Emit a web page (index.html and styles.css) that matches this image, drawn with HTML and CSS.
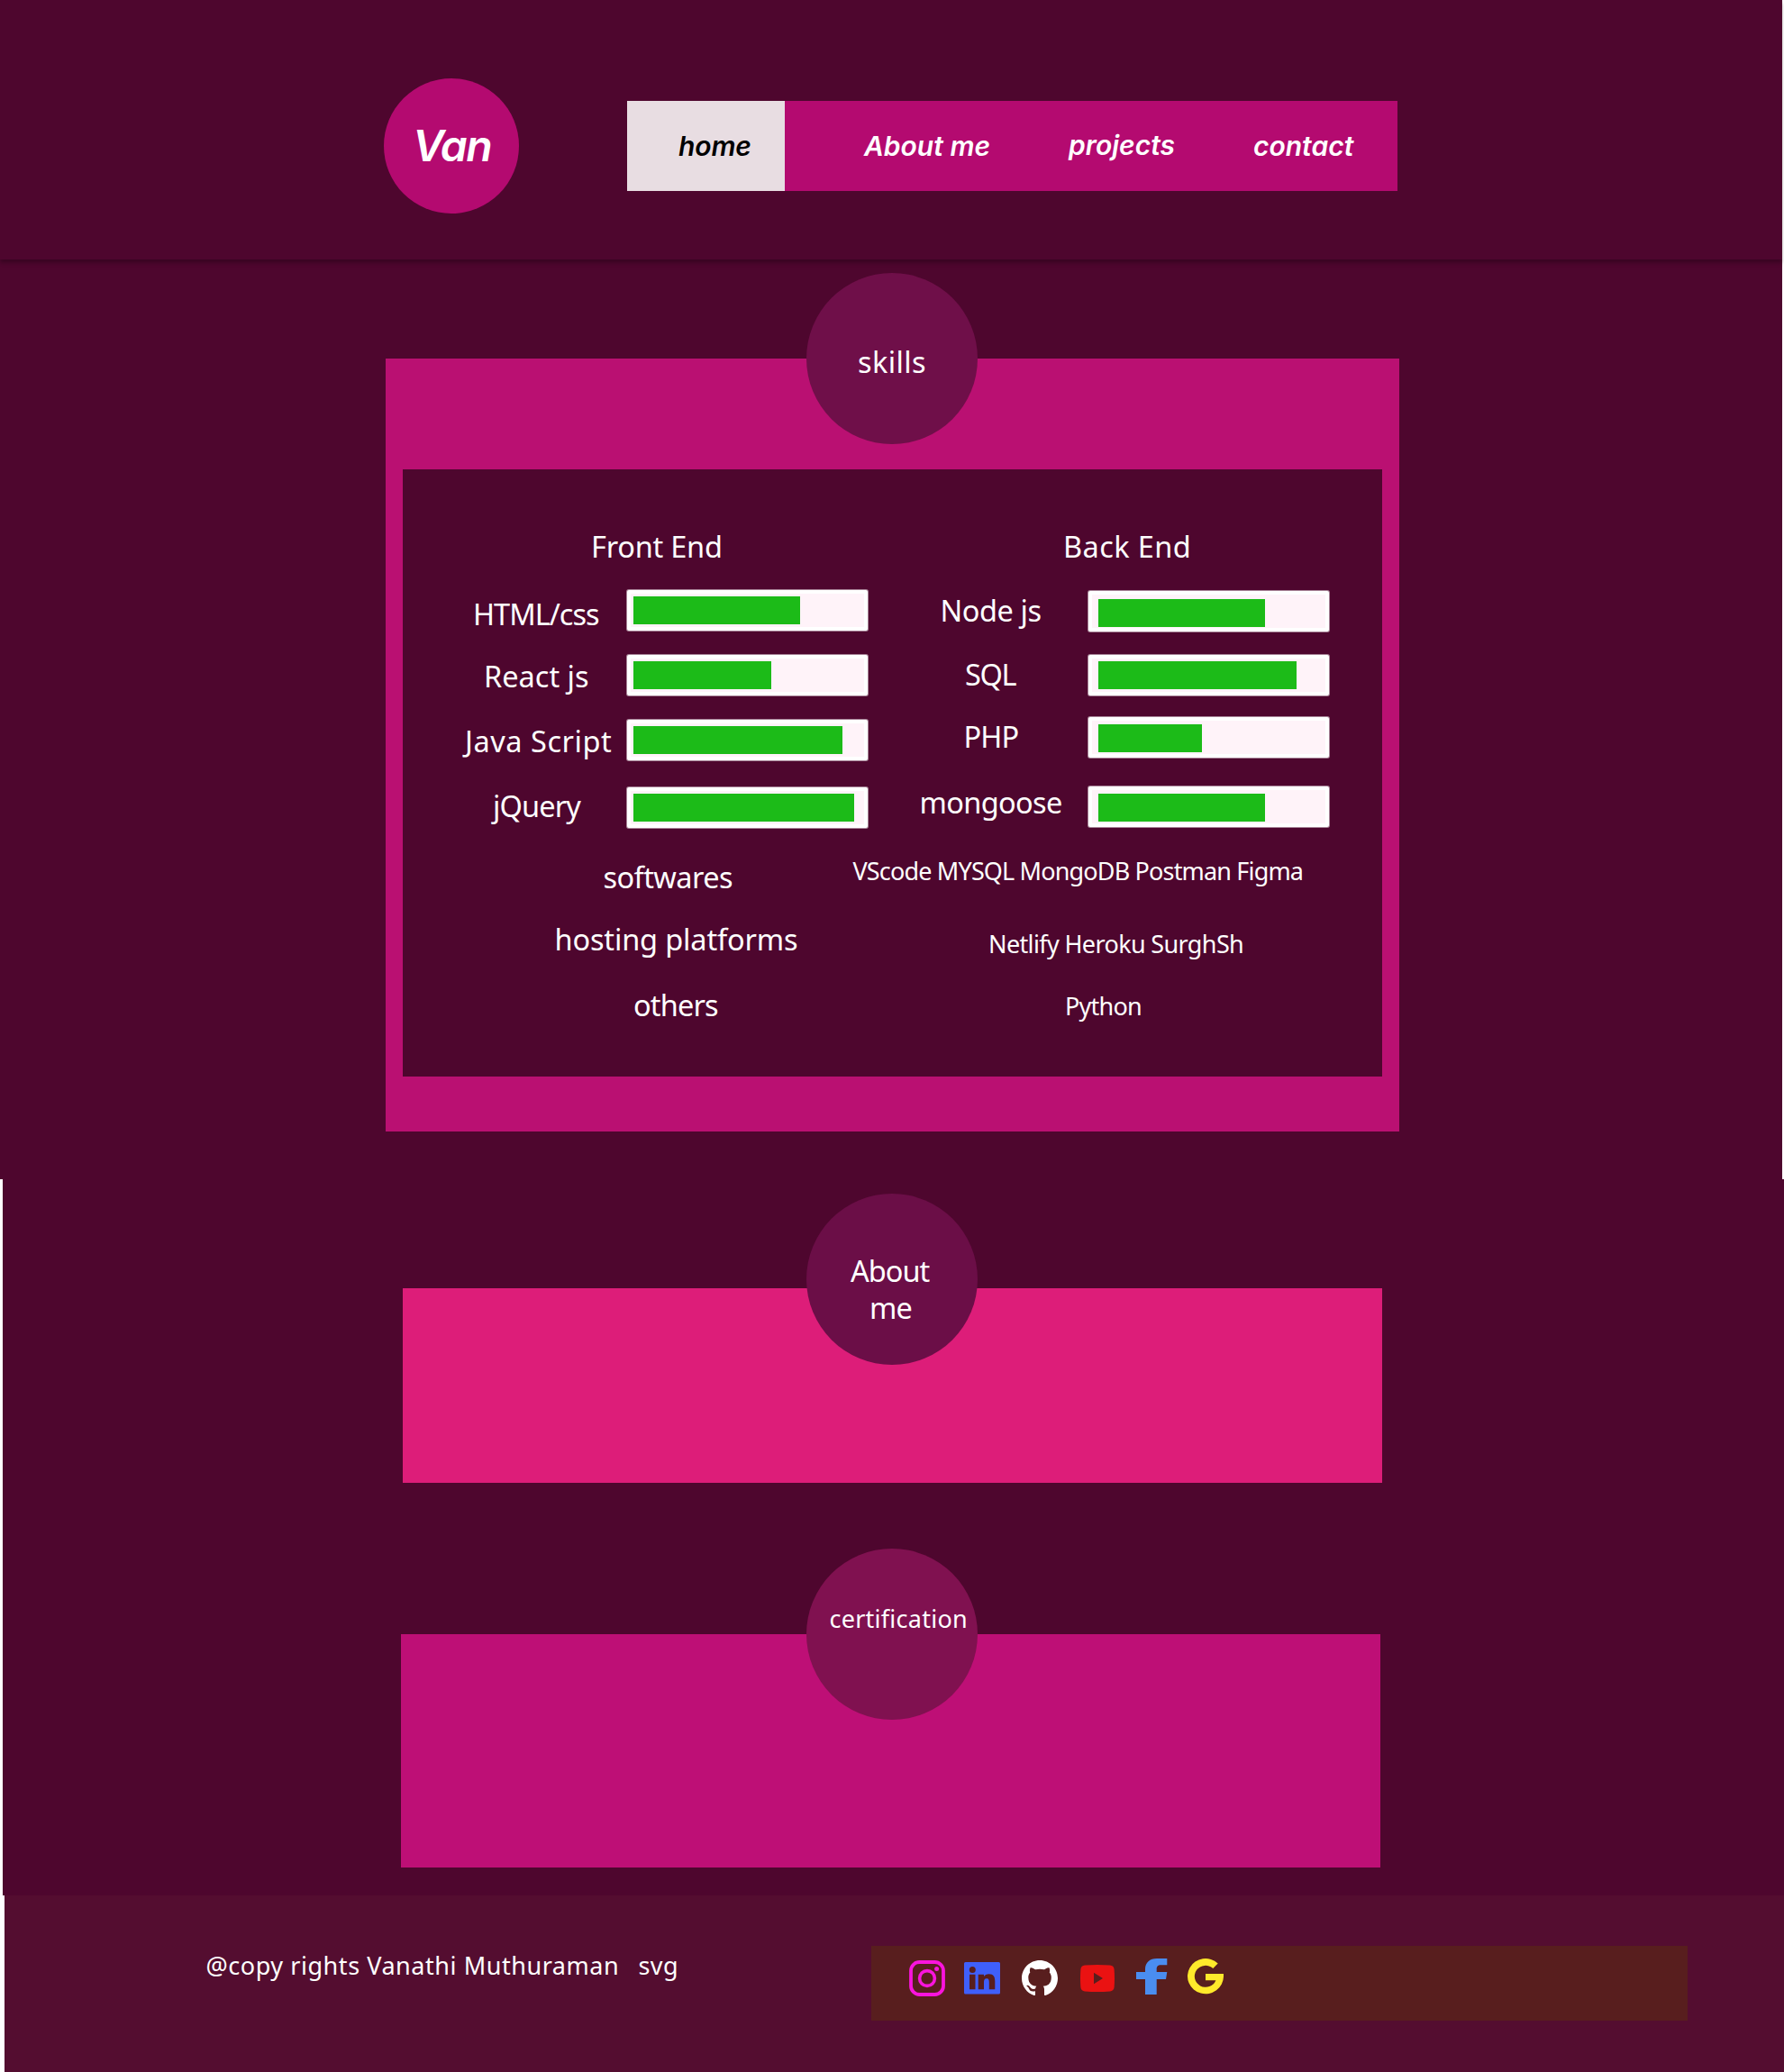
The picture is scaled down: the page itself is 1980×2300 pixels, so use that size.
FILE: index.html
```html
<!DOCTYPE html>
<html lang="en">
<head>
<meta charset="utf-8">
<title>Van</title>
<link rel="stylesheet" href="styles.css">
</head>
<body>
<header class="top">
  <a class="logo"><span>Van</span></a>
  <nav class="nav">
    <a class="home"><span>home</span></a>
    <a class="about-link"><span>About me</span></a>
    <a class="projects-link"><span>projects</span></a>
    <a class="contact-link"><span>contact</span></a>
  </nav>
</header>
<main>
  <section class="skills">
    <div class="skills-card">
      <h1 class="badge skills-badge"><span>skills</span></h1>
      <div class="panel">
        <div class="columns">
          <div class="front">
            <h2><span>Front End</span></h2>
            <div class="row"><span class="label html">HTML/css</span><div class="bar"><i style="width:185px"></i></div></div>
            <div class="row"><span class="label react">React js</span><div class="bar"><i style="width:153px"></i></div></div>
            <div class="row"><span class="label js">Java Script</span><div class="bar"><i style="width:232px"></i></div></div>
            <div class="row"><span class="label jquery">jQuery</span><div class="bar"><i style="width:245px"></i></div></div>
          </div>
          <div class="back">
            <h2><span>Back End</span></h2>
            <div class="row"><span class="label node">Node js</span><div class="bar"><i style="width:185px"></i></div></div>
            <div class="row"><span class="label sql">SQL</span><div class="bar"><i style="width:220px"></i></div></div>
            <div class="row"><span class="label php">PHP</span><div class="bar"><i style="width:115px"></i></div></div>
            <div class="row"><span class="label mongoose">mongoose</span><div class="bar"><i style="width:185px"></i></div></div>
          </div>
        </div>
        <div class="tools">
          <div class="tool"><span class="name soft">softwares</span><span class="value soft-v">VScode MYSQL MongoDB Postman Figma</span></div>
          <div class="tool"><span class="name host">hosting platforms</span><span class="value host-v">Netlify Heroku SurghSh</span></div>
          <div class="tool"><span class="name other">others</span><span class="value other-v">Python</span></div>
        </div>
      </div>
    </div>
  </section>
  <section class="more">
    <div class="about-card">
      <h1 class="badge about-badge"><span class="about">About</span><span class="me">me</span></h1>
    </div>
    <div class="cert-card">
      <h1 class="badge cert-badge"><span>certification</span></h1>
    </div>
  </section>
</main>
<footer class="footer">
  <p class="copy"><span>@copy rights Vanathi Muthuraman</span></p>
  <p class="svg-note"><span>svg</span></p>
  <div class="social">
    <svg class="ig" width="40" height="40" viewBox="0 0 40 40"><rect x="2" y="2" width="36" height="36" rx="9.5" fill="none" stroke="#f914dd" stroke-width="3.8"/><circle cx="20" cy="20" r="8.4" fill="none" stroke="#f914dd" stroke-width="3.6"/><circle cx="30.6" cy="9.4" r="2.5" fill="#f914dd"/></svg>
    <svg class="li" width="40" height="36" viewBox="0 0 40 36"><path fill="#3f5ffb" fill-rule="evenodd" d="M1.5 0H38.5A1.5 1.5 0 0 1 40 1.5V34A1.5 1.5 0 0 1 38.500 35.500H1.500A1.500 1.500 0 0 1 0 34V1.500A1.500 1.500 0 0 1 1.500 0zM9.300 5a3.500 3.500 0 1 0 0 7a3.500 3.500 0 1 0 0-7zM6 13.800V30.300H12.500V13.800zM15.700 13.800V30.300H22V22.300C22 20.200 22.500 18.300 25 18.300S27.800 20.400 27.800 22.400V30.300H34.300V21.300C34.300 16.500 32.800 13.300 27.600 13.300C24.900 13.300 22.900 14.500 22 16.100V13.800z"/></svg>
    <svg class="gh" width="40" height="40" viewBox="0 0 16 16"><path fill="#fff" d="M8 0C3.580 0 0 3.580 0 8c0 3.540 2.290 6.530 5.470 7.590.4.070.55-.17.55-.38 0-.19-.01-.82-.01-1.490-2.010.37-2.530-.49-2.690-.94-.09-.23-.48-.94-.82-1.130-.28-.15-.68-.52-.01-.53.63-.01 1.080.58 1.230.82.72 1.210 1.870.87 2.330.66.070-.52.28-.87.51-1.070-1.780-.2-3.640-.89-3.640-3.950 0-.87.31-1.590.82-2.150-.08-.2-.36-1.020.08-2.120 0 0 .67-.21 2.200.82.64-.18 1.320-.27 2-.27.68 0 1.360.09 2 .27 1.530-1.040 2.200-.82 2.200-.82.44 1.100.16 1.920.08 2.120.51.56.82 1.270.82 2.150 0 3.070-1.870 3.750-3.650 3.950.29.25.54.73.54 1.480 0 1.070-.01 1.930-.01 2.200 0 .21.15.46.55.38A8.013 8.013 0 0 0 16 8c0-4.420-3.580-8-8-8z"/></svg>
    <svg class="yt" width="38" height="30" viewBox="0 0 38 30"><path fill="#ea1212" fill-rule="evenodd" d="M5 .6Q19-.6 33 .6Q37.200 1 37.600 5Q38.400 15 37.600 25Q37.200 29 33 29.400Q19 30.600 5 29.400Q.8 29 .4 25Q-.4 15 .4 5Q.8 1 5 .6zM15 8.700V21.300L25 15z"/></svg>
    <svg class="fb" width="35" height="40" viewBox="0 0 35 40"><path fill="#4a8df0" d="M10 40V23H0V15H10V12C10 4.500 15 0 23 0H34.300V7.300H27.500C23.700 7.300 22.700 9.300 22.700 11.800V15H34.300L33 23H22.700V40z"/></svg>
    <svg class="gg" width="40" height="40" viewBox="0 0 40 40"><path fill="#ffe92b" d="M33.700 5.400A20 19.600 0 1 0 40 20V17H20V24.200H31.400A12.200 12 0 1 1 28.300 11z"/></svg>
  </div>
</footer>
</body>
</html>
```

FILE: styles.css
```css
* { box-sizing: border-box; }
body { margin: 0; background: #fff; color: #fff; font-family: "Noto Sans", sans-serif; font-weight: 400; }
h1, h2, p { margin: 0; font-weight: inherit; font-size: inherit; }
span { white-space: pre; }

.top { display: flex; align-items: flex-start; position: relative; width: 1978px; height: 288px; padding-left: 426px; background: #4e062e; box-shadow: 0 4px 4px rgba(0, 0, 0, .25); font-family: Inter, sans-serif; font-style: italic; font-weight: 600; }
.logo { width: 150px; height: 150px; margin-top: 87px; padding: 45px 0 0 32px; border-radius: 50%; background: #b40a70; font-size: 48px; line-height: 60px; letter-spacing: -1.5px; }
.nav { display: flex; width: 855px; height: 100px; margin: 112px 0 0 120px; background: #b40a70; font-size: 30px; line-height: 100px; }
.home { width: 175px; padding-left: 57px; background: #e8dde2; color: #000; letter-spacing: -.1px; }
.about-link { width: 227px; padding-left: 88px; }
.projects-link { width: 206px; padding-left: 88px; line-height: 98px; }
.contact-link { padding-left: 87px; }

.skills { width: 1978px; height: 1021px; padding: 110px 0 0 428px; background: #4e062e; }
.skills-card { position: relative; width: 1125px; height: 858px; padding: 123px 19px 0; background: #ba1072; }
.panel { height: 674px; padding-top: 65px; background: #4e062e; }
.columns { display: flex; height: 334px; font-size: 32.500px; line-height: 42px; }
.front { width: 516px; }
.front h2 { padding-left: 209px; letter-spacing: -.22px; }
.back h2 { padding-left: 217px; letter-spacing: .4px; }
.columns h2 { height: 40px; }
.row { display: flex; justify-content: flex-end; height: 46px; margin-top: 26px; }
.label { flex: 1; height: 40px; }
.front .row:nth-child(2), .front .row:nth-child(5) { margin-top: 29px; }
.back { width: 512px; }
.back .row { margin-top: 25px; }
.back .row:nth-child(2) { margin-top: 30px; }
.back .row:nth-child(4) { margin-top: 23px; }
.back .row:nth-child(5) { margin-top: 31px; }

.bar { width: 267px; height: 45px; padding: 3px; border: 4px solid #fff; border-radius: 2px; background: #fff3f9; box-shadow: 0 0 0 1px rgba(255, 255, 255, .5); }
.bar i { display: block; height: 31px; background: #1cbb18; }
.back .bar { padding-left: 7px; padding-top: 4px; }
.back .row:nth-child(2) .bar { padding-top: 5px; }
.back .row:nth-child(3) .bar { padding-top: 3px; }

.html { margin-top: 6px; padding-left: 78px; letter-spacing: -.99px; }
.react { margin-top: 3px; padding-left: 90px; }
.js { margin-top: 3px; padding-left: 69px; letter-spacing: .55px; }
.jquery { padding-left: 100px; letter-spacing: -.85px; }
.node { margin-top: 1px; padding-left: 80.500px; letter-spacing: -.42px; }
.sql { margin-top: 1px; padding-left: 108px; letter-spacing: -1.37px; }
.php { margin-top: 1px; padding-left: 106.500px; letter-spacing: -.88px; }
.mongoose { margin-top: -3px; padding-left: 57.500px; letter-spacing: -.65px; }

.tools { padding-top: 34px; }
.tool { display: flex; height: 40px; margin-bottom: 29px; }
.tool:nth-child(2) { margin-bottom: 33px; }
.name { width: 497px; font-size: 32.500px; line-height: 40px; }
.value { font-size: 27px; line-height: 34px; }
.soft { padding-left: 222.500px; letter-spacing: -.57px; }
.host { padding-left: 168.500px; letter-spacing: -.15px; }
.other { padding-left: 256px; letter-spacing: -.85px; }
.soft-v { margin-top: -4px; padding-left: 2.500px; letter-spacing: -.84px; }
.host-v { margin-top: 8px; padding-left: 153px; letter-spacing: -.63px; }
.other-v { margin-top: 4px; padding-left: 238px; letter-spacing: -.78px; }

.badge { position: absolute; top: -95px; width: 190px; height: 190px; border-radius: 50%; font-size: 32.500px; line-height: 40px; }
.badge span { display: block; }
.skills-badge { left: 467px; padding: 79px 0 0 57px; background: #6f0f49; letter-spacing: .38px; }
.about-badge { top: -105px; left: 448px; padding: 65px 0 0 49px; background: #6b0e47; line-height: 41px; letter-spacing: -1px; }
.about-badge .me { padding-left: 21px; }
.cert-badge { left: 450px; padding: 61px 0 0 25.500px; background: #801150; font-size: 27px; line-height: 34px; letter-spacing: .25px; }

.more { width: 1977px; height: 795px; margin-left: 3px; padding: 121px 0 0 442px; background: #4e062e; }
.about-card { position: relative; width: 1087px; height: 216px; margin-left: 2px; background: #dd1d79; }
.cert-card { position: relative; width: 1087px; height: 259px; margin-top: 168px; background: #be0f76; }

.footer { display: flex; align-items: flex-start; height: 196px; margin-left: 5px; padding: 56px 0 0 223px; background: #540d30; font-size: 27px; line-height: 34px; }
.copy { width: 480px; padding: 5px 0 0 .5px; letter-spacing: .55px; }
.svg-note { width: 254px; padding: 5px 0 0 .5px; letter-spacing: .42px; }
.social { display: flex; align-items: flex-start; flex: none; width: 906px; height: 83px; margin-left: 5px; padding-left: 42px; background: #581e1e; }
.ig { margin-top: 16px; }
.li { margin: 18px 0 0 21px; }
.gh { margin: 16px 0 0 24px; }
.yt { margin: 21px 0 0 25px; }
.fb { margin: 14px 0 0 24px; }
.gg { margin: 14px 0 0 22px; }
```
